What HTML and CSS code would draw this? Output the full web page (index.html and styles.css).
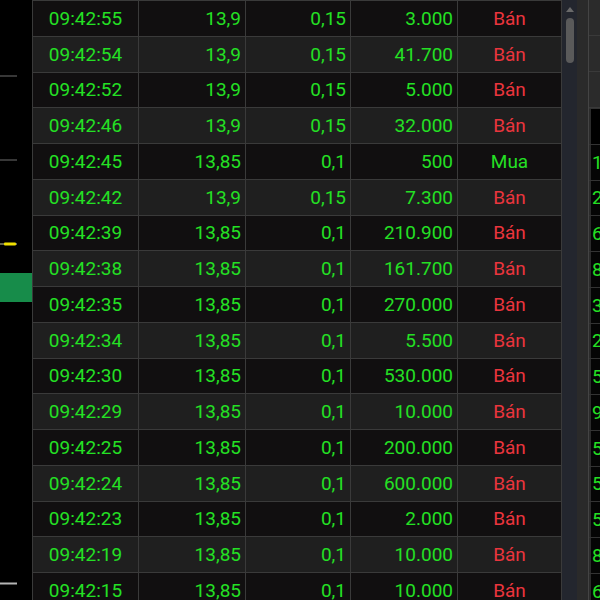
FILE: index.html
```html
<!DOCTYPE html>
<html lang="vi">
<head>
    <meta charset="UTF-8">
    <title>Khớp lệnh</title>
    <link rel="stylesheet" href="styles.css">
</head>
<body>

    <div class="screen">
        <!-- Chart edge -->
        <div class="chart">
            <svg width="32" height="600" viewBox="0 0 32 600">
                <line x1="0" y1="76" x2="17" y2="76" stroke="#4a4a4a" stroke-width="1.5"/>
                <line x1="0" y1="160" x2="17" y2="160" stroke="#4a4a4a" stroke-width="1.5"/>
                <line x1="0" y1="244" x2="17" y2="244" stroke="#cfcfa0" stroke-width="1"/>
                <rect x="4" y="242.5" width="12" height="3" rx="1" fill="#f0e000"/>
                <rect x="0" y="273" width="32" height="29" fill="#178c4a"/>
                <line x1="0" y1="583.5" x2="17" y2="583.5" stroke="#b5b5b5" stroke-width="2"/>
            </svg>
        </div>

        <!-- Trades -->
        <div class="tape">
            <div class="row"><span class="time">09:42:55</span><span class="num">13,9</span><span class="num">0,15</span><span class="num">3.000</span><span class="side sell">Bán</span></div>
            <div class="row"><span class="time">09:42:54</span><span class="num">13,9</span><span class="num">0,15</span><span class="num">41.700</span><span class="side sell">Bán</span></div>
            <div class="row"><span class="time">09:42:52</span><span class="num">13,9</span><span class="num">0,15</span><span class="num">5.000</span><span class="side sell">Bán</span></div>
            <div class="row"><span class="time">09:42:46</span><span class="num">13,9</span><span class="num">0,15</span><span class="num">32.000</span><span class="side sell">Bán</span></div>
            <div class="row"><span class="time">09:42:45</span><span class="num">13,85</span><span class="num">0,1</span><span class="num">500</span><span class="side buy">Mua</span></div>
            <div class="row"><span class="time">09:42:42</span><span class="num">13,9</span><span class="num">0,15</span><span class="num">7.300</span><span class="side sell">Bán</span></div>
            <div class="row"><span class="time">09:42:39</span><span class="num">13,85</span><span class="num">0,1</span><span class="num">210.900</span><span class="side sell">Bán</span></div>
            <div class="row"><span class="time">09:42:38</span><span class="num">13,85</span><span class="num">0,1</span><span class="num">161.700</span><span class="side sell">Bán</span></div>
            <div class="row"><span class="time">09:42:35</span><span class="num">13,85</span><span class="num">0,1</span><span class="num">270.000</span><span class="side sell">Bán</span></div>
            <div class="row"><span class="time">09:42:34</span><span class="num">13,85</span><span class="num">0,1</span><span class="num">5.500</span><span class="side sell">Bán</span></div>
            <div class="row"><span class="time">09:42:30</span><span class="num">13,85</span><span class="num">0,1</span><span class="num">530.000</span><span class="side sell">Bán</span></div>
            <div class="row"><span class="time">09:42:29</span><span class="num">13,85</span><span class="num">0,1</span><span class="num">10.000</span><span class="side sell">Bán</span></div>
            <div class="row"><span class="time">09:42:25</span><span class="num">13,85</span><span class="num">0,1</span><span class="num">200.000</span><span class="side sell">Bán</span></div>
            <div class="row"><span class="time">09:42:24</span><span class="num">13,85</span><span class="num">0,1</span><span class="num">600.000</span><span class="side sell">Bán</span></div>
            <div class="row"><span class="time">09:42:23</span><span class="num">13,85</span><span class="num">0,1</span><span class="num">2.000</span><span class="side sell">Bán</span></div>
            <div class="row"><span class="time">09:42:19</span><span class="num">13,85</span><span class="num">0,1</span><span class="num">10.000</span><span class="side sell">Bán</span></div>
            <div class="row"><span class="time">09:42:15</span><span class="num">13,85</span><span class="num">0,1</span><span class="num">10.000</span><span class="side sell">Bán</span></div>
        </div>

        <!-- Scrollbar -->
        <div class="scrollbar">
            <span class="arrow"></span>
            <span class="thumb"></span>
        </div>

        <div class="gutter"></div>

        <!-- Depth (cut off) -->
        <div class="depth">
            <div class="depth-head"></div>
            <div class="depth-head"></div>
            <div class="depth-head"></div>
            <div class="depth-row empty"></div>
            <div class="depth-row"><span>1</span></div>
            <div class="depth-row"><span>2</span></div>
            <div class="depth-row"><span>6</span></div>
            <div class="depth-row"><span>8</span></div>
            <div class="depth-row"><span>3</span></div>
            <div class="depth-row"><span>2</span></div>
            <div class="depth-row"><span>5</span></div>
            <div class="depth-row"><span>9</span></div>
            <div class="depth-row"><span>5</span></div>
            <div class="depth-row"><span>5</span></div>
            <div class="depth-row"><span>5</span></div>
            <div class="depth-row"><span>8</span></div>
            <div class="depth-row"><span>6</span></div>
        </div>
    </div>

</body>
</html>
```

FILE: styles.css
```css
* {
    margin: 0;
    padding: 0;
    box-sizing: border-box;
}

body {
    background: #000;
    font-family: Roboto, 'Liberation Sans', sans-serif;
    overflow: hidden;
}

.screen {
    display: flex;
    width: 600px;
    height: 600px;
    overflow: hidden;
}

/* Left chart edge */
.chart {
    width: 32px;
    flex-shrink: 0;
    background: #000;
}

.chart svg {
    display: block;
}

/* Trades table */
.tape {
    width: 529px;
    flex-shrink: 0;
}

.row {
    display: grid;
    grid-template-columns: 106px 107px 105px 107px 104px;
    height: 35.75px;
    border-top: 1px solid #3a3a3a;
    background: #110f10;
    font-size: 19px;
    color: #24e024;
}

.row:nth-child(even) {
    background: #1f1f1f;
}

.row span {
    display: flex;
    align-items: center;
    border-left: 1px solid #3a3a3a;
    line-height: 1;
}

.time {
    justify-content: center;
}

.num {
    justify-content: flex-end;
    padding-right: 4px;
}

.side {
    justify-content: center;
}

.sell {
    color: #ea353d;
}

.buy {
    color: #24e024;
}

/* Scrollbar */
.scrollbar {
    width: 16px;
    flex-shrink: 0;
    background: #23262e;
    border-left: 1px solid #3a3a3a;
    display: flex;
    flex-direction: column;
    align-items: center;
    padding-top: 7px;
}

.arrow {
    width: 0;
    height: 0;
    border-left: 4px solid transparent;
    border-right: 4px solid transparent;
    border-bottom: 5px solid #6a6a6a;
}

.thumb {
    width: 8px;
    height: 45px;
    margin-top: 6px;
    border-radius: 4px;
    background: #5a5a5a;
}

.gutter {
    width: 11px;
    flex-shrink: 0;
    background: #2a2a2a;
}

/* Depth panel, mostly off screen */
.depth {
    flex: 1;
    border-left: 1px solid #444;
    background: #2b2b2b;
}

.depth-head {
    height: 36px;
    border-bottom: 1px solid #3a3a3a;
}

.depth-row {
    height: 35.75px;
    border-top: 1px solid #333;
    padding-left: 2px;
    font-size: 19px;
    color: #24e024;
}

.depth-row span,
.depth-row.empty::before {
    display: flex;
    align-items: center;
    height: 100%;
    padding-left: 1px;
    background: #050505;
    line-height: 1;
}

.depth-row.empty::before {
    content: '';
    background: #000;
}
```
